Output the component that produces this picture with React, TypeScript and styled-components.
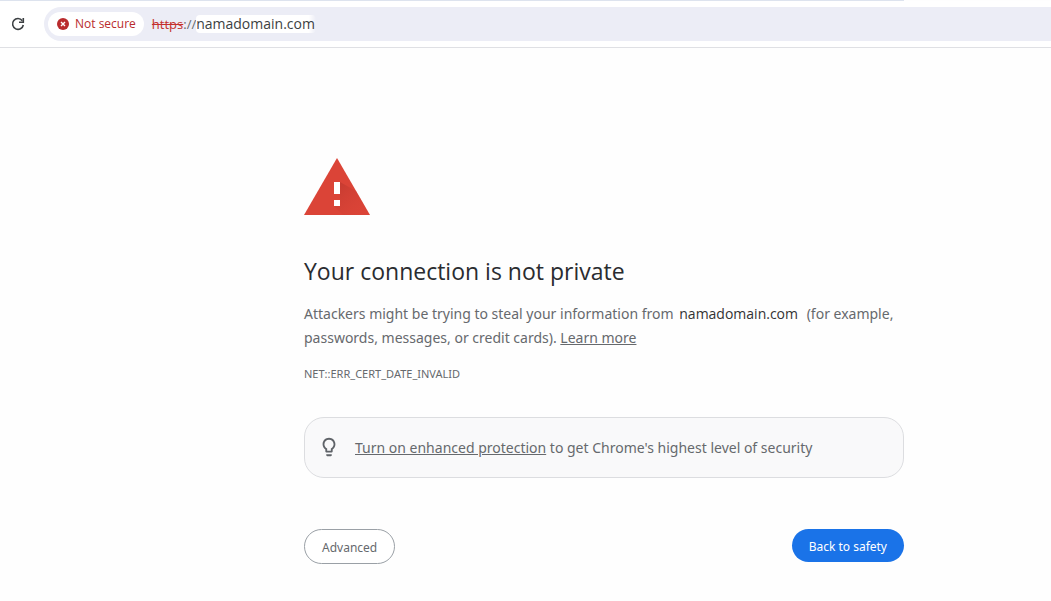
import React from 'react';
import styled, { createGlobalStyle } from 'styled-components';

const GlobalStyle = createGlobalStyle`
  *, *::before, *::after { box-sizing: border-box; }
  body {
    margin: 0;
    background: #fefefe;
    color: #66696d;
    font-family: "Noto Sans", "Open Sans", sans-serif;
    font-size: 14px;
    line-height: 24px;
  }
  button, input { font: inherit; color: inherit; }
`;

const Toolbar = styled.header`
  display: flex;
  align-items: center;
  gap: 8px;
  height: 47px;
  background: #fff;
  border-bottom: 1px solid #dfe0e4;
`;

const TabEdge = styled.div`
  width: 86%;
  height: 1px;
  background: #dde3ee;
`;

const ReloadButton = styled.button`
  display: flex;
  align-items: center;
  justify-content: center;
  width: 36px;
  height: 34px;
  padding: 0;
  border: 0;
  background: none;
  color: #3c4043;
`;

const AddressBar = styled.div`
  flex: 1;
  display: flex;
  align-items: center;
  gap: 8px;
  height: 34px;
  padding-left: 4px;
  border-radius: 17px 0 0 17px;
  background: #ecedf6;
  font-family: "Open Sans", "Noto Sans", sans-serif;
`;

const SecurityChip = styled.button`
  display: flex;
  align-items: center;
  gap: 6px;
  height: 24px;
  padding: 0 8px 0 9px;
  border: 0;
  border-radius: 12px;
  background: #fff;
  color: #b92b2d;
  font-size: 12px;
  line-height: 24px;
`;

const Url = styled.label`
  display: flex;
  align-items: center;
  line-height: 18px;
  font-size: 13px;
`;

const Scheme = styled.s`
  color: #c5302c;
`;

const HostInput = styled.input`
  width: 120px;
  height: 18px;
  padding: 0;
  border: 0;
  border-radius: 4px;
  background: linear-gradient(90deg, #fff 94%, transparent);
  color: #3c3f42;
  font-size: 14px;
  outline: none;
`;

const Content = styled.main`
  max-width: 600px;
  margin-left: 304px;
  padding-top: 110px;
`;

const Title = styled.h1`
  margin: 40px 0 15px;
  color: #2a2c30;
  font-family: "Open Sans", "Noto Sans", sans-serif;
  font-size: 23px;
  font-weight: 400;
  line-height: 32px;
`;

const Message = styled.p`
  margin: 0;
`;

const Host = styled.span`
  margin: 0 5px 0 2px;
  color: #333;
  font-family: "Open Sans", "Noto Sans", sans-serif;
`;

const TextLink = styled.a`
  color: inherit;
  text-decoration: underline;
`;

const ErrorCode = styled.p`
  margin: 12px 0 0;
  font-size: 11px;
`;

const Tip = styled.aside`
  display: flex;
  align-items: flex-start;
  gap: 15px;
  margin-top: 31px;
  padding: 18px 13px 17px;
  border: 1px solid #dcdde0;
  border-radius: 20px;
  background: #f9f9fa;
`;

const Actions = styled.div`
  display: flex;
  justify-content: space-between;
  align-items: flex-start;
  margin-top: 51px;
`;

const Button = styled.button<{ $primary?: boolean }>`
  height: ${p => (p.$primary ? 33 : 35)}px;
  padding: 2px 17px 0;
  border: ${p => (p.$primary ? '0' : '1px solid #9aa0a6')};
  border-radius: 18px;
  background: ${p => (p.$primary ? '#1a73e8' : '#fff')};
  color: ${p => (p.$primary ? '#fff' : '#66696d')};
  font-size: 12px;
`;

const ReloadIcon = () => (
  <svg width="16" height="16" viewBox="0 0 16 16" fill="none" stroke="currentColor" strokeWidth="1.6">
    <path d="M13.300 9A5.400 5.400 0 1 1 12.300 4.700" />
    <path d="M13.300 2v4.200H9" />
  </svg>
);

const DangerIcon = () => (
  <svg width="12" height="12" viewBox="0 0 12 12">
    <circle cx="6" cy="6" r="6" fill="#b92b2d" />
    <path d="M4 4l4 4M8 4l-4 4" stroke="#fff" strokeWidth="1.4" />
  </svg>
);

const WarningIcon = () => (
  <svg width="66" height="57" viewBox="0 0 66 57" display="block" role="img" aria-label="Warning">
    <defs>
      <linearGradient id="shade" x1="0" y1="0" x2="1" y2="1">
        <stop offset="0" stopColor="#b8352c" stopOpacity=".7" />
        <stop offset="1" stopColor="#db4437" stopOpacity="0" />
      </linearGradient>
    </defs>
    <path d="M33 0l33 57H0z" fill="#db4437" />
    <path d="M36 24l16 9 14 24H39l-9-9 6-6z" fill="url(#shade)" />
    <path d="M30 24h6v12h-6zM30 42h6v6h-6z" fill="#fff" />
  </svg>
);

const BulbIcon = () => (
  <svg width="22" height="22" viewBox="0 0 24 24" fill="#5f6368">
    <path d="M9 21c0 .5.4 1 1 1h4c.6 0 1-.5 1-1v-1H9v1zm3-19C8.100 2 5 5.100 5 9c0 2.400 1.200 4.500 3 5.700V17c0 .5.4 1 1 1h6c.6 0 1-.5 1-1v-2.300c1.800-1.300 3-3.400 3-5.700 0-3.900-3.100-7-7-7zm2.900 11.100l-.9.6V16h-4v-2.300l-.9-.6C7.800 12.200 7 10.600 7 9c0-2.800 2.200-5 5-5s5 2.200 5 5c0 1.600-.8 3.200-2.100 4.100z" />
  </svg>
);

export default function App() {
  return (
    <>
      <GlobalStyle />
      <TabEdge />
      <Toolbar>
        <ReloadButton aria-label="Reload"><ReloadIcon /></ReloadButton>
        <AddressBar>
          <SecurityChip><DangerIcon />Not secure</SecurityChip>
          <Url>
            <Scheme>https</Scheme>://
            <HostInput aria-label="Address" defaultValue="namadomain.com" />
          </Url>
        </AddressBar>
      </Toolbar>
      <Content>
        <WarningIcon />
        <Title>Your connection is not private</Title>
        <Message>
          Attackers might be trying to steal your information from <Host>namadomain.com</Host> (for example,
          passwords, messages, or credit cards). <TextLink href="#learn-more">Learn more</TextLink>
        </Message>
        <ErrorCode>NET::ERR_CERT_DATE_INVALID</ErrorCode>
        <Tip>
          <BulbIcon />
          <span><TextLink href="#protection">Turn on enhanced protection</TextLink> to get Chrome's highest level of security</span>
        </Tip>
        <Actions>
          <Button>Advanced</Button>
          <Button $primary>Back to safety</Button>
        </Actions>
      </Content>
    </>
  );
}
